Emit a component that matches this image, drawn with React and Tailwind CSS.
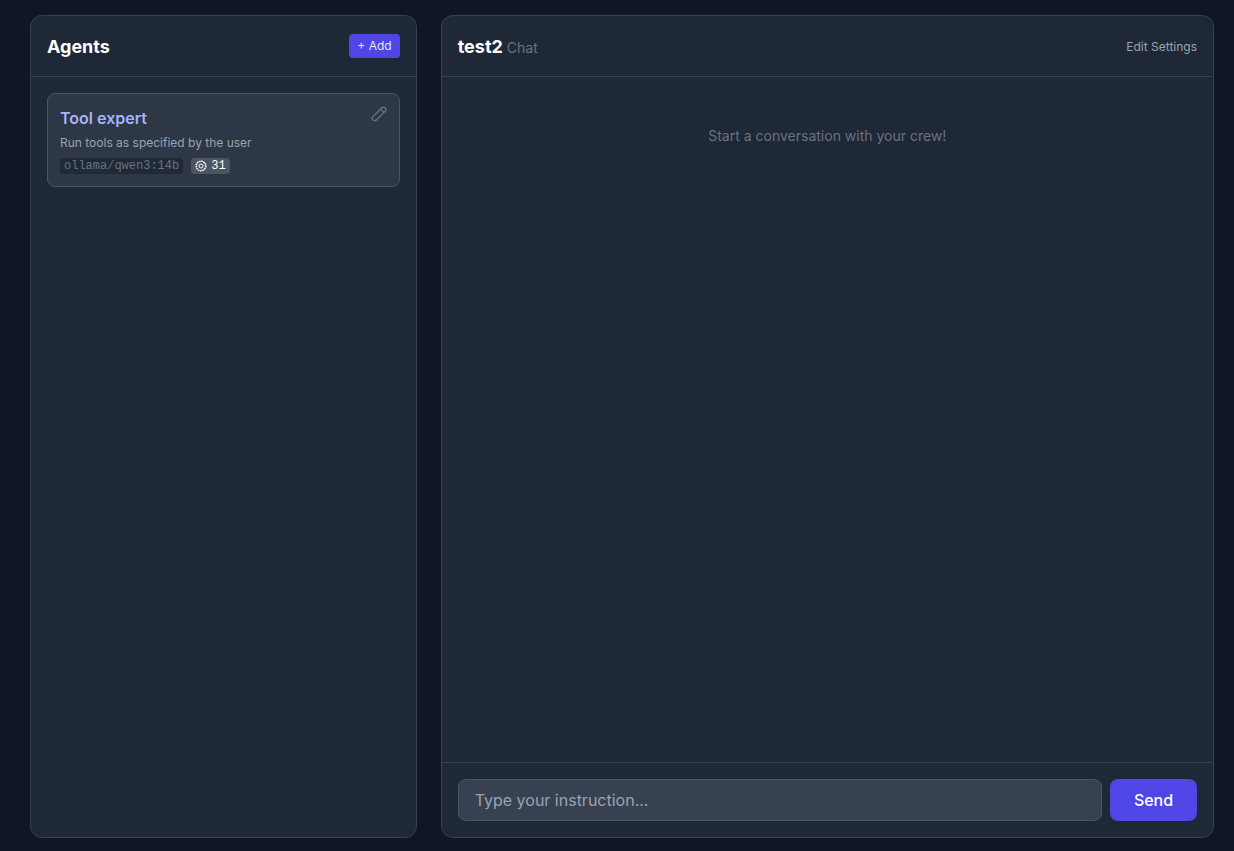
import React from 'react';

const PencilIcon = () => (
  <svg width="16" height="16" viewBox="0 0 16 16" fill="none" stroke="currentColor" strokeWidth="1.3">
    <g transform="rotate(-45 8 8)">
      <rect x="-0.5" y="5.6" width="17" height="4.8" rx="2.4" />
      <path d="M12.5 5.6v4.8" />
    </g>
  </svg>
);

const GearIcon = () => (
  <svg width="12" height="12" viewBox="0 0 24 24" fill="none" stroke="currentColor" strokeWidth="2">
    <circle cx="12" cy="12" r="4" />
    <circle cx="12" cy="12" r="9.5" strokeDasharray="3.2 1.2" strokeWidth="3" />
  </svg>
);

const AgentCard = () => (
  <div className="relative rounded-lg border border-[#4b5563] bg-[#2d3746] pt-3 px-3 h-[94px]">
    <button className="absolute top-3 right-[12px] text-[#6b7280]">
      <PencilIcon />
    </button>
    <h3 className="text-[16px] leading-6 font-semibold text-[#a5b4fc]">Tool expert</h3>
    <p className="mt-[5px] text-[12px] leading-4 text-[#9ca3af]">Run tools as specified by the user</p>
    <div className="mt-[7px] flex items-center gap-2 font-['Liberation_Mono',monospace]">
      <span className="rounded bg-[#1f2937] px-1 text-[12px] leading-4 text-[#6b7280]">ollama/qwen3:14b</span>
      <span className="flex items-center gap-1 rounded bg-[#4b5563] px-1 text-[12px] leading-4 text-white">
        <GearIcon />
        31
      </span>
    </div>
  </div>
);

export default function App() {
  return (
    <div className="h-[851px] overflow-hidden bg-[#101625] pl-[30px] pr-5 pt-[15px] pb-[13px] font-['Inter',sans-serif]">
      <div className="grid h-full grid-cols-[1fr_2fr] gap-6">
        <aside className="flex flex-col rounded-xl border border-[#374151] bg-[#1e2837]">
          <header className="flex h-[61px] items-center justify-between border-b border-[#374151] px-4">
            <h2 className="text-[18px] font-bold text-white">Agents</h2>
            <button className="h-6 rounded bg-[#4f46e5] px-2 text-[12px] text-[#e0e7ff]">+ Add</button>
          </header>
          <div className="p-4">
            <AgentCard />
          </div>
        </aside>

        <main className="flex flex-col rounded-xl border border-[#374151] bg-[#1e2837]">
          <header className="flex h-[61px] items-center justify-between border-b border-[#374151] px-4">
            <div className="flex items-baseline gap-1">
              <h2 className="text-[18px] font-bold text-white">test2</h2>
              <span className="text-[14px] text-[#6b7280]">Chat</span>
            </div>
            <button className="pt-[2px] text-[12px] text-[#9ca3af]">Edit Settings</button>
          </header>
          <div className="flex-1 p-4">
            <p className="mt-[33px] text-center text-[14px] leading-5 text-[#6b7280]">Start a conversation with your crew!</p>
          </div>
          <footer className="flex gap-2 border-t border-[#374151] p-4">
            <input
              placeholder="Type your instruction..."
              className="h-[42px] flex-1 rounded-lg border border-[#4b5563] bg-[#374151] px-4 text-[16px] text-white placeholder:text-[#9ca3af]"
            />
            <button className="h-[42px] w-[87px] rounded-lg bg-[#4f46e5] text-[16px] font-medium text-white">Send</button>
          </footer>
        </main>
      </div>
    </div>
  );
}
